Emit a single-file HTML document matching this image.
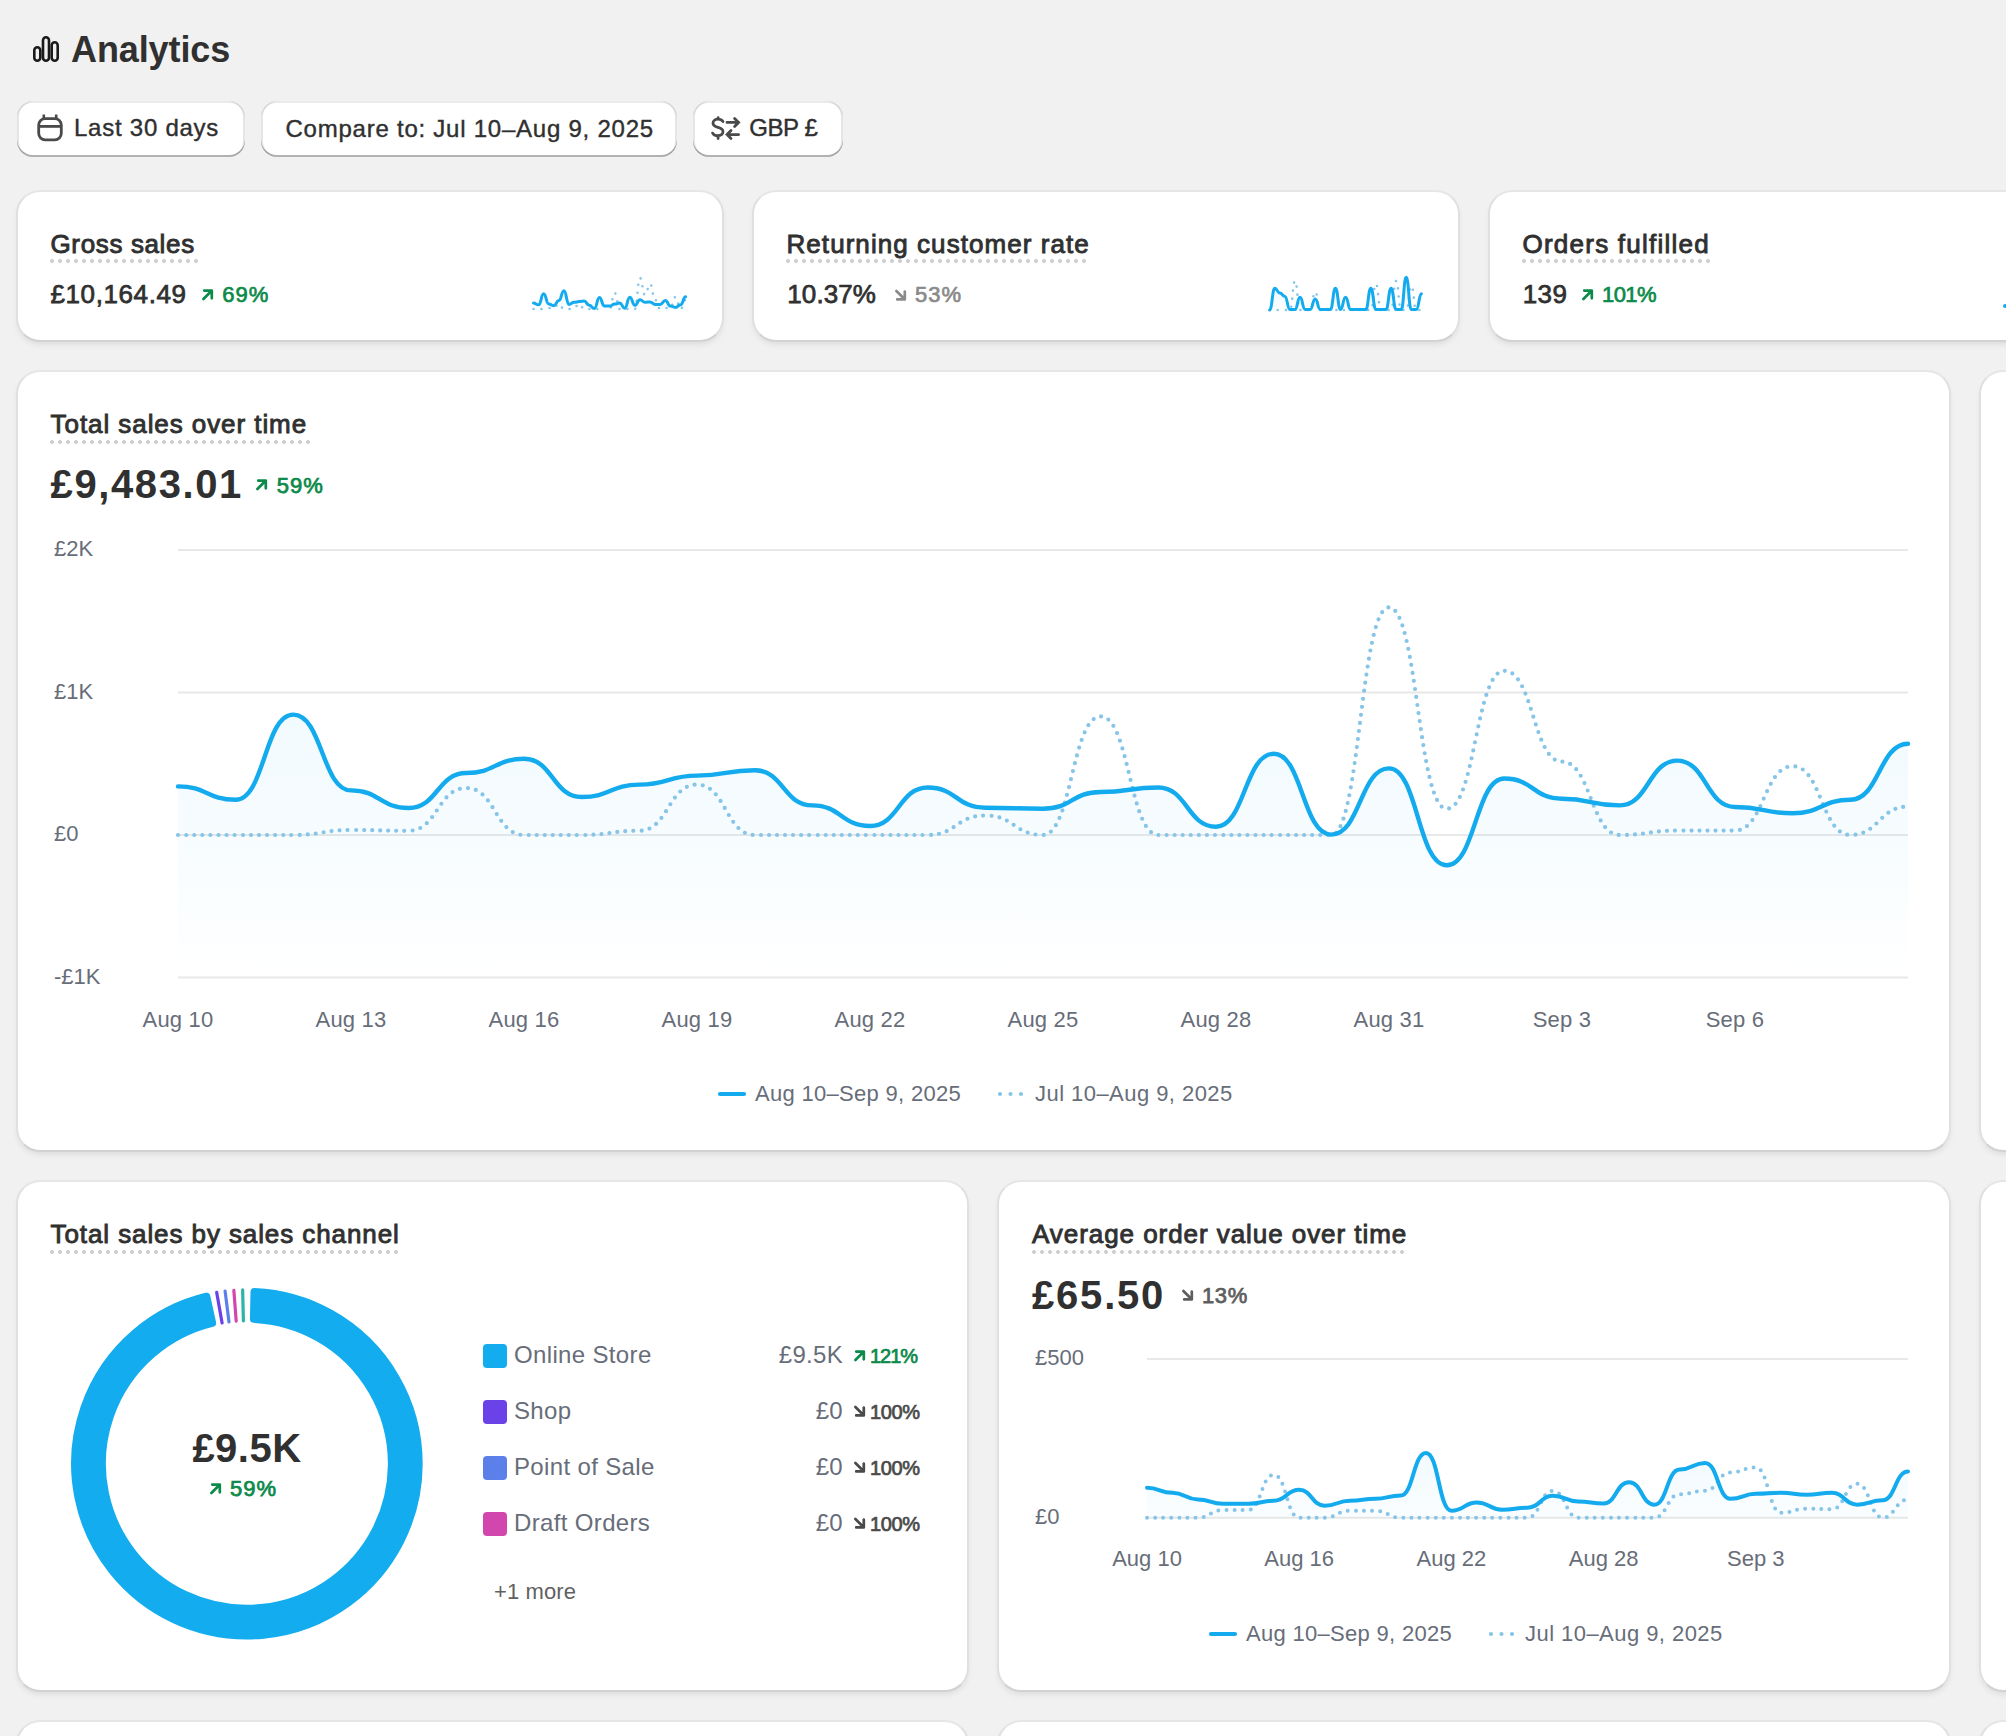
<!DOCTYPE html>
<html><head><meta charset="utf-8">
<style>
html,body{margin:0;padding:0;}
body{width:2006px;height:1736px;overflow:hidden;background:#f1f1f1;position:relative;font-family:"Liberation Sans",sans-serif;color:#303030;}
.t{position:absolute;white-space:nowrap;line-height:1;}
.card{position:absolute;box-sizing:border-box;background:#fff;border:2px solid #e0e0e0;border-top-color:#e6e6e6;border-bottom-color:#d2d2d2;border-radius:24px;box-shadow:0 4px 6px -2px rgba(26,26,26,.10);}
.btn{position:absolute;background:#fff;border-radius:16px;box-shadow: inset 0 2px 0 rgba(0,0,0,.08), inset 0 -2px 0 rgba(0,0,0,.30), inset -2px 0 0 rgba(0,0,0,.10), inset 2px 0 0 rgba(0,0,0,.10);}
.u{position:absolute;height:4px;background-image:radial-gradient(circle at 2px 2px,#cfcfcf 1.8px,transparent 2.2px);background-size:8px 4px;background-repeat:repeat-x;}
svg{position:absolute;overflow:visible;}
.a{position:absolute;}
</style></head><body>
<svg style="left:0;top:0" width="80" height="80"><g fill="none" stroke="#1a1a1a" stroke-width="2.6"><rect x="34.3" y="47.3" width="6" height="13.4" rx="3"/><rect x="43" y="37.2" width="6" height="23.5" rx="3"/><rect x="51.7" y="42.2" width="6" height="18.5" rx="3"/></g></svg><div class="t" style="left:71px;top:31.7px;font-size:36px;font-weight:700;color:#303030;letter-spacing:-0.1px;">Analytics</div>
<div class="btn" style="left:17px;top:101px;width:228px;height:56px"></div><svg style="left:0;top:0" width="80" height="160"><g fill="none" stroke="#4a4a4a" stroke-width="2.8"><rect x="38.7" y="118.6" width="22.6" height="21.2" rx="6.5"/><path d="M38.7 126.4H61.3"/><path d="M43.8 114.5v4M56.2 114.5v4" stroke-width="2.6"/></g></svg><div class="t" style="left:74px;top:116.4px;font-size:24px;font-weight:400;color:#303030;letter-spacing:0.75px;-webkit-text-stroke:0.4px #303030;">Last 30 days</div>
<div class="btn" style="left:261px;top:101px;width:416px;height:56px"></div><div class="t" style="left:285.5px;top:116.6px;font-size:24px;font-weight:400;color:#303030;letter-spacing:0.76px;-webkit-text-stroke:0.4px #303030;">Compare to: Jul 10–Aug 9, 2025</div>
<div class="btn" style="left:693px;top:101px;width:150px;height:56px"></div><svg style="left:0;top:0" width="760" height="160"><g fill="none" stroke="#4a4a4a" stroke-width="2.8" stroke-linecap="round"><path d="M723.0 121.6c-1-1.6-2.8-2.4-5-2.4-2.9 0-5 1.6-5 4 0 2.5 2.3 3.3 5 4.1 2.8 0.8 5 1.7 5 4.3 0 2.5-2.2 4.1-5.2 4.1-2.4 0-4.3-0.9-5.2-2.6M718.1 117.6v1.6M718.1 135.9v2.6"/><path d="M727 122.4h11.6M734.6 118.4l4 4-4 4M738.6 134.6H727M731 130.6l-4 4 4 4"/></g></svg><div class="t" style="left:749.2px;top:116.4px;font-size:24px;font-weight:400;color:#303030;letter-spacing:-0.4px;-webkit-text-stroke:0.4px #303030;">GBP £</div>
<div class="card" style="left:16px;top:190px;width:708px;height:152px"></div><div class="t" style="left:50.5px;top:230.9px;font-size:26px;font-weight:400;color:#303030;letter-spacing:0.637px;-webkit-text-stroke:0.9px #303030;">Gross sales</div>
<div class="card" style="left:752px;top:190px;width:708px;height:152px"></div><div class="t" style="left:786.5px;top:230.9px;font-size:26px;font-weight:400;color:#303030;letter-spacing:1.059px;-webkit-text-stroke:0.9px #303030;">Returning customer rate</div>
<div class="card" style="left:1488px;top:190px;width:708px;height:152px"></div><div class="t" style="left:1522.5px;top:230.9px;font-size:26px;font-weight:400;color:#303030;letter-spacing:1.235px;-webkit-text-stroke:0.9px #303030;">Orders fulfilled</div>
<div class="u" style="left:50px;top:259px;width:148px"></div><div class="u" style="left:786px;top:259px;width:300px"></div><div class="u" style="left:1522px;top:259px;width:188px"></div><div class="t" style="left:50.5px;top:280.8px;font-size:26px;font-weight:400;color:#303030;letter-spacing:0.6px;-webkit-text-stroke:0.75px #303030;">£10,164.49</div>
<svg class="a" style="left:201px;top:287px" width="14" height="14" viewBox="0 0 14 14"><path d="M2.4 12L10.4 4M3.2 3.6H10.8V11.3" fill="none" stroke="#0c8a4a" stroke-width="2.7" stroke-linecap="round" stroke-linejoin="round"/></svg><div class="t" style="left:222.2px;top:284.2px;font-size:22px;font-weight:400;color:#0c8a4a;letter-spacing:1.0px;-webkit-text-stroke:0.7px #0c8a4a;">69%</div>
<div class="t" style="left:787.3px;top:281.0px;font-size:26px;font-weight:400;color:#303030;letter-spacing:0.1px;-webkit-text-stroke:0.75px #303030;">10.37%</div>
<svg class="a" style="left:894px;top:288px" width="14" height="14" viewBox="0 0 14 14"><path d="M2.4 3L10.4 11M3.2 11.4H10.8V3.7" fill="none" stroke="#8a8a8a" stroke-width="2.7" stroke-linecap="round" stroke-linejoin="round"/></svg><div class="t" style="left:915px;top:284.4px;font-size:22px;font-weight:400;color:#8a8a8a;letter-spacing:1.0px;-webkit-text-stroke:0.7px #8a8a8a;">53%</div>
<div class="t" style="left:1522.7px;top:280.6px;font-size:26px;font-weight:400;color:#303030;letter-spacing:0.4px;-webkit-text-stroke:0.75px #303030;">139</div>
<svg class="a" style="left:1581px;top:287px" width="14" height="14" viewBox="0 0 14 14"><path d="M2.4 12L10.4 4M3.2 3.6H10.8V11.3" fill="none" stroke="#0c8a4a" stroke-width="2.7" stroke-linecap="round" stroke-linejoin="round"/></svg><div class="t" style="left:1602px;top:284.0px;font-size:22px;font-weight:400;color:#0c8a4a;letter-spacing:-0.6px;-webkit-text-stroke:0.7px #0c8a4a;">101%</div>
<svg style="left:0;top:0" width="2006" height="400"><defs><linearGradient id="sg533" x1="0" y1="275" x2="0" y2="313" gradientUnits="userSpaceOnUse"><stop offset="0" stop-color="#13aaee" stop-opacity="0.12"/><stop offset="1" stop-color="#13aaee" stop-opacity="0"/></linearGradient></defs>
<path d="M533.5,303.1C536.0,303.1 536.0,304.8 538.6,304.8C541.1,304.8 541.1,293.8 543.6,293.8C546.2,293.8 546.2,304.0 548.7,304.0C551.2,304.0 551.2,305.7 553.8,305.7C556.3,305.7 556.3,300.6 558.9,300.6C561.4,300.6 561.4,290.8 563.9,290.8C566.5,290.8 566.5,304.4 569.0,304.4C571.5,304.4 571.5,302.3 574.1,302.3C576.6,302.3 576.6,301.6 579.1,301.6C581.7,301.6 581.7,301.0 584.2,301.0C586.7,301.0 586.7,305.3 589.3,305.3C591.8,305.3 591.8,308.6 594.3,308.6C596.9,308.6 596.9,297.6 599.4,297.6C601.9,297.6 601.9,306.1 604.5,306.1C607.0,306.1 607.0,306.1 609.5,306.1C612.1,306.1 612.1,304.0 614.6,304.0C617.2,304.0 617.2,303.1 619.7,303.1C622.2,303.1 622.2,308.2 624.8,308.2C627.3,308.2 627.3,297.2 629.8,297.2C632.4,297.2 632.4,305.3 634.9,305.3C637.4,305.3 637.4,299.7 640.0,299.7C642.5,299.7 642.5,302.3 645.0,302.3C647.6,302.3 647.6,301.9 650.1,301.9C652.6,301.9 652.6,304.4 655.2,304.4C657.7,304.4 657.7,304.4 660.2,304.4C662.8,304.4 662.8,300.4 665.3,300.4C667.9,300.4 667.9,306.1 670.4,306.1C672.9,306.1 672.9,307.4 675.5,307.4C678.0,307.4 678.0,304.8 680.5,304.8C683.1,304.8 683.1,296.8 685.6,296.8L685.6,313L533.5,313Z" fill="url(#sg533)"/>
<path d="M533.5,309.0C536.0,309.0 536.0,309.0 538.6,309.0C541.1,309.0 541.1,309.0 543.6,309.0C546.2,309.0 546.2,308.0 548.7,308.0C551.2,308.0 551.2,308.0 553.8,308.0C556.3,308.0 556.3,304.0 558.9,304.0C561.4,304.0 561.4,309.0 563.9,309.0C566.5,309.0 566.5,309.0 569.0,309.0C571.5,309.0 571.5,308.0 574.1,308.0C576.6,308.0 576.6,304.0 579.1,304.0C581.7,304.0 581.7,309.0 584.2,309.0C586.7,309.0 586.7,309.0 589.3,309.0C591.8,309.0 591.8,309.0 594.3,309.0C596.9,309.0 596.9,309.0 599.4,309.0C601.9,309.0 601.9,306.0 604.5,306.0C607.0,306.0 607.0,309.0 609.5,309.0C612.1,309.0 612.1,293.0 614.6,293.0C617.2,293.0 617.2,309.0 619.7,309.0C622.2,309.0 622.2,309.0 624.8,309.0C627.3,309.0 627.3,309.0 629.8,309.0C632.4,309.0 632.4,309.0 634.9,309.0C637.4,309.0 637.4,278.0 640.0,278.0C642.5,278.0 642.5,295.0 645.0,295.0C647.6,295.0 647.6,284.0 650.1,284.0C652.6,284.0 652.6,300.0 655.2,300.0C657.7,300.0 657.7,309.0 660.2,309.0C662.8,309.0 662.8,308.0 665.3,308.0C667.9,308.0 667.9,308.0 670.4,308.0C672.9,308.0 672.9,297.0 675.5,297.0C678.0,297.0 678.0,309.0 680.5,309.0C683.1,309.0 683.1,300.0 685.6,300.0" fill="none" stroke="#86c4e8" stroke-width="2.6" stroke-linecap="round" stroke-dasharray="0 8"/>
<path d="M533.5,303.1C536.0,303.1 536.0,304.8 538.6,304.8C541.1,304.8 541.1,293.8 543.6,293.8C546.2,293.8 546.2,304.0 548.7,304.0C551.2,304.0 551.2,305.7 553.8,305.7C556.3,305.7 556.3,300.6 558.9,300.6C561.4,300.6 561.4,290.8 563.9,290.8C566.5,290.8 566.5,304.4 569.0,304.4C571.5,304.4 571.5,302.3 574.1,302.3C576.6,302.3 576.6,301.6 579.1,301.6C581.7,301.6 581.7,301.0 584.2,301.0C586.7,301.0 586.7,305.3 589.3,305.3C591.8,305.3 591.8,308.6 594.3,308.6C596.9,308.6 596.9,297.6 599.4,297.6C601.9,297.6 601.9,306.1 604.5,306.1C607.0,306.1 607.0,306.1 609.5,306.1C612.1,306.1 612.1,304.0 614.6,304.0C617.2,304.0 617.2,303.1 619.7,303.1C622.2,303.1 622.2,308.2 624.8,308.2C627.3,308.2 627.3,297.2 629.8,297.2C632.4,297.2 632.4,305.3 634.9,305.3C637.4,305.3 637.4,299.7 640.0,299.7C642.5,299.7 642.5,302.3 645.0,302.3C647.6,302.3 647.6,301.9 650.1,301.9C652.6,301.9 652.6,304.4 655.2,304.4C657.7,304.4 657.7,304.4 660.2,304.4C662.8,304.4 662.8,300.4 665.3,300.4C667.9,300.4 667.9,306.1 670.4,306.1C672.9,306.1 672.9,307.4 675.5,307.4C678.0,307.4 678.0,304.8 680.5,304.8C683.1,304.8 683.1,296.8 685.6,296.8" fill="none" stroke="#13aaee" stroke-width="3" stroke-linecap="round" stroke-linejoin="round"/></svg>
<svg style="left:0;top:0" width="2006" height="400"><defs><linearGradient id="sg1269" x1="0" y1="275" x2="0" y2="313" gradientUnits="userSpaceOnUse"><stop offset="0" stop-color="#13aaee" stop-opacity="0.12"/><stop offset="1" stop-color="#13aaee" stop-opacity="0"/></linearGradient></defs>
<path d="M1269.7,309.9C1272.2,309.9 1272.2,288.3 1274.8,288.3C1277.3,288.3 1277.3,293.0 1279.8,293.0C1282.3,293.0 1282.3,296.4 1284.9,296.4C1287.4,296.4 1287.4,309.5 1289.9,309.5C1292.5,309.5 1292.5,309.5 1295.0,309.5C1297.5,309.5 1297.5,297.2 1300.0,297.2C1302.6,297.2 1302.6,309.5 1305.1,309.5C1307.6,309.5 1307.6,309.5 1310.2,309.5C1312.7,309.5 1312.7,298.9 1315.2,298.9C1317.7,298.9 1317.7,309.5 1320.3,309.5C1322.8,309.5 1322.8,309.5 1325.3,309.5C1327.9,309.5 1327.9,309.5 1330.4,309.5C1332.9,309.5 1332.9,288.3 1335.4,288.3C1338.0,288.3 1338.0,309.5 1340.5,309.5C1343.0,309.5 1343.0,297.2 1345.6,297.2C1348.1,297.2 1348.1,309.5 1350.6,309.5C1353.1,309.5 1353.1,309.5 1355.7,309.5C1358.2,309.5 1358.2,309.5 1360.7,309.5C1363.2,309.5 1363.2,309.5 1365.8,309.5C1368.3,309.5 1368.3,288.3 1370.8,288.3C1373.4,288.3 1373.4,309.5 1375.9,309.5C1378.4,309.5 1378.4,309.5 1380.9,309.5C1383.5,309.5 1383.5,309.5 1386.0,309.5C1388.5,309.5 1388.5,288.3 1391.1,288.3C1393.6,288.3 1393.6,309.5 1396.1,309.5C1398.6,309.5 1398.6,309.5 1401.2,309.5C1403.7,309.5 1403.7,277.3 1406.2,277.3C1408.8,277.3 1408.8,309.5 1411.3,309.5C1413.8,309.5 1413.8,309.5 1416.3,309.5C1418.9,309.5 1418.9,293.8 1421.4,293.8L1421.4,313L1269.7,313Z" fill="url(#sg1269)"/>
<path d="M1269.7,310.0C1272.2,310.0 1272.2,310.0 1274.8,310.0C1277.3,310.0 1277.3,310.0 1279.8,310.0C1282.3,310.0 1282.3,310.0 1284.9,310.0C1287.4,310.0 1287.4,310.0 1289.9,310.0C1292.5,310.0 1292.5,281.0 1295.0,281.0C1297.5,281.0 1297.5,310.0 1300.0,310.0C1302.6,310.0 1302.6,310.0 1305.1,310.0C1307.6,310.0 1307.6,310.0 1310.2,310.0C1312.7,310.0 1312.7,292.0 1315.2,292.0C1317.7,292.0 1317.7,310.0 1320.3,310.0C1322.8,310.0 1322.8,310.0 1325.3,310.0C1327.9,310.0 1327.9,310.0 1330.4,310.0C1332.9,310.0 1332.9,310.0 1335.4,310.0C1338.0,310.0 1338.0,310.0 1340.5,310.0C1343.0,310.0 1343.0,310.0 1345.6,310.0C1348.1,310.0 1348.1,310.0 1350.6,310.0C1353.1,310.0 1353.1,310.0 1355.7,310.0C1358.2,310.0 1358.2,310.0 1360.7,310.0C1363.2,310.0 1363.2,310.0 1365.8,310.0C1368.3,310.0 1368.3,310.0 1370.8,310.0C1373.4,310.0 1373.4,284.0 1375.9,284.0C1378.4,284.0 1378.4,310.0 1380.9,310.0C1383.5,310.0 1383.5,310.0 1386.0,310.0C1388.5,310.0 1388.5,310.0 1391.1,310.0C1393.6,310.0 1393.6,281.0 1396.1,281.0C1398.6,281.0 1398.6,310.0 1401.2,310.0C1403.7,310.0 1403.7,310.0 1406.2,310.0C1408.8,310.0 1408.8,286.0 1411.3,286.0C1413.8,286.0 1413.8,310.0 1416.3,310.0C1418.9,310.0 1418.9,310.0 1421.4,310.0" fill="none" stroke="#86c4e8" stroke-width="2.6" stroke-linecap="round" stroke-dasharray="0 8"/>
<path d="M1269.7,309.9C1272.2,309.9 1272.2,288.3 1274.8,288.3C1277.3,288.3 1277.3,293.0 1279.8,293.0C1282.3,293.0 1282.3,296.4 1284.9,296.4C1287.4,296.4 1287.4,309.5 1289.9,309.5C1292.5,309.5 1292.5,309.5 1295.0,309.5C1297.5,309.5 1297.5,297.2 1300.0,297.2C1302.6,297.2 1302.6,309.5 1305.1,309.5C1307.6,309.5 1307.6,309.5 1310.2,309.5C1312.7,309.5 1312.7,298.9 1315.2,298.9C1317.7,298.9 1317.7,309.5 1320.3,309.5C1322.8,309.5 1322.8,309.5 1325.3,309.5C1327.9,309.5 1327.9,309.5 1330.4,309.5C1332.9,309.5 1332.9,288.3 1335.4,288.3C1338.0,288.3 1338.0,309.5 1340.5,309.5C1343.0,309.5 1343.0,297.2 1345.6,297.2C1348.1,297.2 1348.1,309.5 1350.6,309.5C1353.1,309.5 1353.1,309.5 1355.7,309.5C1358.2,309.5 1358.2,309.5 1360.7,309.5C1363.2,309.5 1363.2,309.5 1365.8,309.5C1368.3,309.5 1368.3,288.3 1370.8,288.3C1373.4,288.3 1373.4,309.5 1375.9,309.5C1378.4,309.5 1378.4,309.5 1380.9,309.5C1383.5,309.5 1383.5,309.5 1386.0,309.5C1388.5,309.5 1388.5,288.3 1391.1,288.3C1393.6,288.3 1393.6,309.5 1396.1,309.5C1398.6,309.5 1398.6,309.5 1401.2,309.5C1403.7,309.5 1403.7,277.3 1406.2,277.3C1408.8,277.3 1408.8,309.5 1411.3,309.5C1413.8,309.5 1413.8,309.5 1416.3,309.5C1418.9,309.5 1418.9,293.8 1421.4,293.8" fill="none" stroke="#13aaee" stroke-width="3" stroke-linecap="round" stroke-linejoin="round"/></svg>
<svg style="left:0;top:0" width="2006" height="400"><circle cx="2005" cy="306" r="2" fill="#13aaee"/></svg><div class="card" style="left:16px;top:370px;width:1935px;height:782px"></div><div class="card" style="left:1979px;top:370px;width:800px;height:782px"></div><div class="t" style="left:50.6px;top:411.3px;font-size:26px;font-weight:400;color:#303030;letter-spacing:0.929px;-webkit-text-stroke:0.9px #303030;">Total sales over time</div>
<div class="u" style="left:50px;top:439.5px;width:260px"></div><div class="t" style="left:50.6px;top:463.6px;font-size:40px;font-weight:700;color:#303030;letter-spacing:1.6px;">£9,483.01</div>
<svg class="a" style="left:255px;top:477px" width="14" height="14" viewBox="0 0 14 14"><path d="M2.4 12L10.4 4M3.2 3.6H10.8V11.3" fill="none" stroke="#0c8a4a" stroke-width="2.7" stroke-linecap="round" stroke-linejoin="round"/></svg><div class="t" style="left:276.7px;top:474.7px;font-size:22px;font-weight:400;color:#0c8a4a;letter-spacing:1.0px;-webkit-text-stroke:0.75px #0c8a4a;">59%</div>
<div class="t" style="left:54px;top:537.9px;font-size:22px;font-weight:400;color:#676d79;">£2K</div>
<div class="t" style="left:54px;top:680.6px;font-size:22px;font-weight:400;color:#676d79;">£1K</div>
<div class="t" style="left:54px;top:822.9px;font-size:22px;font-weight:400;color:#676d79;">£0</div>
<div class="t" style="left:54px;top:965.9px;font-size:22px;font-weight:400;color:#676d79;">-£1K</div>
<div class="t" style="left:178.0px;top:1008.9px;font-size:22px;font-weight:400;color:#676d79;letter-spacing:0.2px;transform:translateX(-50%);">Aug 10</div>
<div class="t" style="left:351.0px;top:1008.9px;font-size:22px;font-weight:400;color:#676d79;letter-spacing:0.2px;transform:translateX(-50%);">Aug 13</div>
<div class="t" style="left:524.0px;top:1008.9px;font-size:22px;font-weight:400;color:#676d79;letter-spacing:0.2px;transform:translateX(-50%);">Aug 16</div>
<div class="t" style="left:697.0px;top:1008.9px;font-size:22px;font-weight:400;color:#676d79;letter-spacing:0.2px;transform:translateX(-50%);">Aug 19</div>
<div class="t" style="left:870.0px;top:1008.9px;font-size:22px;font-weight:400;color:#676d79;letter-spacing:0.2px;transform:translateX(-50%);">Aug 22</div>
<div class="t" style="left:1043.0px;top:1008.9px;font-size:22px;font-weight:400;color:#676d79;letter-spacing:0.2px;transform:translateX(-50%);">Aug 25</div>
<div class="t" style="left:1216.0px;top:1008.9px;font-size:22px;font-weight:400;color:#676d79;letter-spacing:0.2px;transform:translateX(-50%);">Aug 28</div>
<div class="t" style="left:1389.0px;top:1008.9px;font-size:22px;font-weight:400;color:#676d79;letter-spacing:0.2px;transform:translateX(-50%);">Aug 31</div>
<div class="t" style="left:1562.0px;top:1008.9px;font-size:22px;font-weight:400;color:#676d79;letter-spacing:0.2px;transform:translateX(-50%);">Sep 3</div>
<div class="t" style="left:1735.0px;top:1008.9px;font-size:22px;font-weight:400;color:#676d79;letter-spacing:0.2px;transform:translateX(-50%);">Sep 6</div>
<svg style="left:0;top:0" width="2006" height="1200"><defs><linearGradient id="mg" x1="0" y1="700" x2="0" y2="975" gradientUnits="userSpaceOnUse"><stop offset="0" stop-color="#13aaee" stop-opacity="0.06"/><stop offset="0.5" stop-color="#13aaee" stop-opacity="0.035"/><stop offset="1" stop-color="#13aaee" stop-opacity="0"/></linearGradient></defs>
<path d="M178,550H1908" stroke="#e8e8e8" stroke-width="2"/><path d="M178,692.6H1908" stroke="#e8e8e8" stroke-width="2"/><path d="M178,835H1908" stroke="#e8e8e8" stroke-width="2"/><path d="M178,977.6H1908" stroke="#e8e8e8" stroke-width="2"/>
<path d="M178.0,786.4C206.8,786.4 206.8,799.8 235.7,799.8C264.5,799.8 264.5,714.6 293.3,714.6C322.2,714.6 322.2,790.4 351.0,790.4C379.8,790.4 379.8,808.0 408.7,808.0C437.5,808.0 437.5,773.0 466.3,773.0C495.2,773.0 495.2,758.8 524.0,758.8C552.8,758.8 552.8,797.0 581.7,797.0C610.5,797.0 610.5,784.6 639.3,784.6C668.2,784.6 668.2,775.6 697.0,775.6C725.8,775.6 725.8,770.2 754.7,770.2C783.5,770.2 783.5,805.4 812.3,805.4C841.2,805.4 841.2,826.0 870.0,826.0C898.8,826.0 898.8,787.5 927.7,787.5C956.5,787.5 956.5,807.7 985.3,807.7C1014.2,807.7 1014.2,808.8 1043.0,808.8C1071.8,808.8 1071.8,792.0 1100.7,792.0C1129.5,792.0 1129.5,787.5 1158.3,787.5C1187.2,787.5 1187.2,826.7 1216.0,826.7C1244.8,826.7 1244.8,753.8 1273.7,753.8C1302.5,753.8 1302.5,834.6 1331.3,834.6C1360.2,834.6 1360.2,768.4 1389.0,768.4C1417.8,768.4 1417.8,865.3 1446.7,865.3C1475.5,865.3 1475.5,778.5 1504.3,778.5C1533.2,778.5 1533.2,798.7 1562.0,798.7C1590.8,798.7 1590.8,805.4 1619.7,805.4C1648.5,805.4 1648.5,760.6 1677.3,760.6C1706.2,760.6 1706.2,807.0 1735.0,807.0C1763.8,807.0 1763.8,813.3 1792.7,813.3C1821.5,813.3 1821.5,799.8 1850.3,799.8C1879.2,799.8 1879.2,743.8 1908.0,743.8L1908,975L178,975Z" fill="url(#mg)"/>
<path d="M178.0,835.0C206.8,835.0 206.8,835.0 235.7,835.0C264.5,835.0 264.5,835.0 293.3,835.0C322.2,835.0 322.2,830.0 351.0,830.0C379.8,830.0 379.8,830.8 408.7,830.8C437.5,830.8 437.5,788.0 466.3,788.0C495.2,788.0 495.2,835.0 524.0,835.0C552.8,835.0 552.8,835.0 581.7,835.0C610.5,835.0 610.5,830.8 639.3,830.8C668.2,830.8 668.2,784.6 697.0,784.6C725.8,784.6 725.8,835.0 754.7,835.0C783.5,835.0 783.5,835.0 812.3,835.0C841.2,835.0 841.2,835.0 870.0,835.0C898.8,835.0 898.8,835.0 927.7,835.0C956.5,835.0 956.5,815.5 985.3,815.5C1014.2,815.5 1014.2,835.0 1043.0,835.0C1071.8,835.0 1071.8,716.4 1100.7,716.4C1129.5,716.4 1129.5,835.0 1158.3,835.0C1187.2,835.0 1187.2,835.0 1216.0,835.0C1244.8,835.0 1244.8,835.0 1273.7,835.0C1302.5,835.0 1302.5,835.0 1331.3,835.0C1360.2,835.0 1360.2,607.4 1389.0,607.4C1417.8,607.4 1417.8,808.8 1446.7,808.8C1475.5,808.8 1475.5,670.8 1504.3,670.8C1533.2,670.8 1533.2,761.7 1562.0,761.7C1590.8,761.7 1590.8,835.0 1619.7,835.0C1648.5,835.0 1648.5,830.6 1677.3,830.6C1706.2,830.6 1706.2,830.6 1735.0,830.6C1763.8,830.6 1763.8,766.2 1792.7,766.2C1821.5,766.2 1821.5,835.0 1850.3,835.0C1879.2,835.0 1879.2,806.6 1908.0,806.6" fill="none" stroke="#86c4e8" stroke-width="4.2" stroke-linecap="round" stroke-dasharray="0 8.1"/>
<path d="M178.0,786.4C206.8,786.4 206.8,799.8 235.7,799.8C264.5,799.8 264.5,714.6 293.3,714.6C322.2,714.6 322.2,790.4 351.0,790.4C379.8,790.4 379.8,808.0 408.7,808.0C437.5,808.0 437.5,773.0 466.3,773.0C495.2,773.0 495.2,758.8 524.0,758.8C552.8,758.8 552.8,797.0 581.7,797.0C610.5,797.0 610.5,784.6 639.3,784.6C668.2,784.6 668.2,775.6 697.0,775.6C725.8,775.6 725.8,770.2 754.7,770.2C783.5,770.2 783.5,805.4 812.3,805.4C841.2,805.4 841.2,826.0 870.0,826.0C898.8,826.0 898.8,787.5 927.7,787.5C956.5,787.5 956.5,807.7 985.3,807.7C1014.2,807.7 1014.2,808.8 1043.0,808.8C1071.8,808.8 1071.8,792.0 1100.7,792.0C1129.5,792.0 1129.5,787.5 1158.3,787.5C1187.2,787.5 1187.2,826.7 1216.0,826.7C1244.8,826.7 1244.8,753.8 1273.7,753.8C1302.5,753.8 1302.5,834.6 1331.3,834.6C1360.2,834.6 1360.2,768.4 1389.0,768.4C1417.8,768.4 1417.8,865.3 1446.7,865.3C1475.5,865.3 1475.5,778.5 1504.3,778.5C1533.2,778.5 1533.2,798.7 1562.0,798.7C1590.8,798.7 1590.8,805.4 1619.7,805.4C1648.5,805.4 1648.5,760.6 1677.3,760.6C1706.2,760.6 1706.2,807.0 1735.0,807.0C1763.8,807.0 1763.8,813.3 1792.7,813.3C1821.5,813.3 1821.5,799.8 1850.3,799.8C1879.2,799.8 1879.2,743.8 1908.0,743.8" fill="none" stroke="#13aaee" stroke-width="4.4" stroke-linecap="round"/>
<path d="M720,1094H744" stroke="#13aaee" stroke-width="4.2" stroke-linecap="round"/>
<path d="M1000,1094H1024" stroke="#86c4e8" stroke-width="4.2" stroke-linecap="round" stroke-dasharray="0 10.5"/>
</svg><div class="t" style="left:755px;top:1083.4px;font-size:22px;font-weight:400;color:#676d79;letter-spacing:0.3px;">Aug 10–Sep 9, 2025</div>
<div class="t" style="left:1035px;top:1083.4px;font-size:22px;font-weight:400;color:#676d79;letter-spacing:0.45px;">Jul 10–Aug 9, 2025</div>
<div class="card" style="left:16px;top:1180px;width:953px;height:512px"></div><div class="card" style="left:997px;top:1180px;width:954px;height:512px"></div><div class="card" style="left:1979px;top:1180px;width:800px;height:512px"></div><div class="card" style="left:16px;top:1720px;width:953px;height:512px"></div><div class="card" style="left:997px;top:1720px;width:954px;height:512px"></div><div class="card" style="left:1979px;top:1720px;width:800px;height:512px"></div><div class="t" style="left:50.6px;top:1221.3px;font-size:26px;font-weight:400;color:#303030;letter-spacing:0.905px;-webkit-text-stroke:0.9px #303030;">Total sales by sales channel</div>
<div class="u" style="left:50px;top:1249.5px;width:348px"></div><svg style="left:0;top:0" width="2006" height="1736"><path d="M254.50,1292.07A171.8,171.8 0 1 1 206.40,1296.74L212.11,1322.93A145,145 0 1 0 253.93,1318.87Z" fill="#12acef" stroke="#12acef" stroke-width="8" stroke-linejoin="round"/><path d="M222.09,1322.97L216.70,1292.44" stroke="#6b42e8" stroke-width="3.2" stroke-linecap="round"/><path d="M228.99,1321.93L225.10,1291.17" stroke="#5b80e9" stroke-width="3.2" stroke-linecap="round"/><path d="M236.19,1321.20L233.86,1290.29" stroke="#d147ad" stroke-width="3.2" stroke-linecap="round"/><path d="M243.41,1320.84L242.65,1289.85" stroke="#2bb5a9" stroke-width="3.2" stroke-linecap="round"/></svg><div class="t" style="left:247px;top:1428.1px;font-size:40px;font-weight:700;color:#303030;letter-spacing:0.5px;transform:translateX(-50%);">£9.5K</div>
<svg class="a" style="left:209px;top:1481px" width="14" height="14" viewBox="0 0 14 14"><path d="M2.4 12L10.4 4M3.2 3.6H10.8V11.3" fill="none" stroke="#0c8a4a" stroke-width="2.7" stroke-linecap="round" stroke-linejoin="round"/></svg><div class="t" style="left:230px;top:1478.4px;font-size:22px;font-weight:400;color:#0c8a4a;letter-spacing:1.0px;-webkit-text-stroke:0.75px #0c8a4a;">59%</div>
<div style="position:absolute;left:483px;top:1343.5px;width:24px;height:24px;border-radius:4px;background:#12acef"></div><div class="t" style="left:514px;top:1343.2px;font-size:24px;font-weight:400;color:#676d79;letter-spacing:0.35px;">Online Store</div>
<div class="t" style="left:843px;top:1343.2px;font-size:24px;font-weight:400;color:#676d79;letter-spacing:0.3px;transform:translateX(-100%);">£9.5K</div>
<svg class="a" style="left:853px;top:1348px" width="14" height="14" viewBox="0 0 14 14"><path d="M2.4 12L10.4 4M3.2 3.6H10.8V11.3" fill="none" stroke="#0c8a4a" stroke-width="2.7" stroke-linecap="round" stroke-linejoin="round"/></svg><div class="t" style="left:870px;top:1345.6px;font-size:20px;font-weight:400;color:#0c8a4a;letter-spacing:-1.0px;-webkit-text-stroke:0.7px #0c8a4a;">121%</div>
<div style="position:absolute;left:483px;top:1399.5px;width:24px;height:24px;border-radius:4px;background:#6b42e8"></div><div class="t" style="left:514px;top:1399.2px;font-size:24px;font-weight:400;color:#676d79;letter-spacing:0.35px;">Shop</div>
<div class="t" style="left:843px;top:1399.2px;font-size:24px;font-weight:400;color:#676d79;letter-spacing:0.3px;transform:translateX(-100%);">£0</div>
<svg class="a" style="left:853px;top:1404px" width="14" height="14" viewBox="0 0 14 14"><path d="M2.4 3L10.4 11M3.2 11.4H10.8V3.7" fill="none" stroke="#4a4a4a" stroke-width="2.7" stroke-linecap="round" stroke-linejoin="round"/></svg><div class="t" style="left:870px;top:1401.6px;font-size:20px;font-weight:400;color:#4a4a4a;letter-spacing:-0.4px;-webkit-text-stroke:0.7px #4a4a4a;">100%</div>
<div style="position:absolute;left:483px;top:1455.5px;width:24px;height:24px;border-radius:4px;background:#5b80e9"></div><div class="t" style="left:514px;top:1455.2px;font-size:24px;font-weight:400;color:#676d79;letter-spacing:0.35px;">Point of Sale</div>
<div class="t" style="left:843px;top:1455.2px;font-size:24px;font-weight:400;color:#676d79;letter-spacing:0.3px;transform:translateX(-100%);">£0</div>
<svg class="a" style="left:853px;top:1460px" width="14" height="14" viewBox="0 0 14 14"><path d="M2.4 3L10.4 11M3.2 11.4H10.8V3.7" fill="none" stroke="#4a4a4a" stroke-width="2.7" stroke-linecap="round" stroke-linejoin="round"/></svg><div class="t" style="left:870px;top:1457.6px;font-size:20px;font-weight:400;color:#4a4a4a;letter-spacing:-0.4px;-webkit-text-stroke:0.7px #4a4a4a;">100%</div>
<div style="position:absolute;left:483px;top:1511.5px;width:24px;height:24px;border-radius:4px;background:#d147ad"></div><div class="t" style="left:514px;top:1511.2px;font-size:24px;font-weight:400;color:#676d79;letter-spacing:0.35px;">Draft Orders</div>
<div class="t" style="left:843px;top:1511.2px;font-size:24px;font-weight:400;color:#676d79;letter-spacing:0.3px;transform:translateX(-100%);">£0</div>
<svg class="a" style="left:853px;top:1516px" width="14" height="14" viewBox="0 0 14 14"><path d="M2.4 3L10.4 11M3.2 11.4H10.8V3.7" fill="none" stroke="#4a4a4a" stroke-width="2.7" stroke-linecap="round" stroke-linejoin="round"/></svg><div class="t" style="left:870px;top:1513.6px;font-size:20px;font-weight:400;color:#4a4a4a;letter-spacing:-0.4px;-webkit-text-stroke:0.7px #4a4a4a;">100%</div>
<div class="t" style="left:494px;top:1581.4px;font-size:22px;font-weight:400;color:#616161;letter-spacing:0.1px;">+1 more</div>
<div class="t" style="left:1032px;top:1221.3px;font-size:26px;font-weight:400;color:#303030;letter-spacing:0.943px;-webkit-text-stroke:0.9px #303030;">Average order value over time</div>
<div class="u" style="left:1032px;top:1249.5px;width:372px"></div><div class="t" style="left:1032px;top:1274.6px;font-size:40px;font-weight:700;color:#303030;letter-spacing:1.8px;">£65.50</div>
<svg class="a" style="left:1181px;top:1288px" width="14" height="14" viewBox="0 0 14 14"><path d="M2.4 3L10.4 11M3.2 11.4H10.8V3.7" fill="none" stroke="#5e5e5e" stroke-width="2.7" stroke-linecap="round" stroke-linejoin="round"/></svg><div class="t" style="left:1202px;top:1284.9px;font-size:22px;font-weight:400;color:#5e5e5e;letter-spacing:0.6px;-webkit-text-stroke:0.75px #5e5e5e;">13%</div>
<div class="t" style="left:1035px;top:1347.4px;font-size:22px;font-weight:400;color:#676d79;">£500</div>
<div class="t" style="left:1035px;top:1505.9px;font-size:22px;font-weight:400;color:#676d79;">£0</div>
<div class="t" style="left:1147.0px;top:1548.4px;font-size:22px;font-weight:400;color:#676d79;transform:translateX(-50%);">Aug 10</div>
<div class="t" style="left:1299.2px;top:1548.4px;font-size:22px;font-weight:400;color:#676d79;transform:translateX(-50%);">Aug 16</div>
<div class="t" style="left:1451.4px;top:1548.4px;font-size:22px;font-weight:400;color:#676d79;transform:translateX(-50%);">Aug 22</div>
<div class="t" style="left:1603.6px;top:1548.4px;font-size:22px;font-weight:400;color:#676d79;transform:translateX(-50%);">Aug 28</div>
<div class="t" style="left:1755.8px;top:1548.4px;font-size:22px;font-weight:400;color:#676d79;transform:translateX(-50%);">Sep 3</div>
<svg style="left:0;top:0" width="2006" height="1736"><defs><linearGradient id="ag" x1="0" y1="1450" x2="0" y2="1517" gradientUnits="userSpaceOnUse"><stop offset="0" stop-color="#13aaee" stop-opacity="0.06"/><stop offset="1" stop-color="#13aaee" stop-opacity="0.02"/></linearGradient></defs>
<path d="M1147,1359H1908M1147,1517.7H1908" stroke="#e8e8e8" stroke-width="2"/>
<path d="M1147.0,1487.8C1159.7,1487.8 1159.7,1492.8 1172.4,1492.8C1185.0,1492.8 1185.0,1499.4 1197.7,1499.4C1210.4,1499.4 1210.4,1503.7 1223.1,1503.7C1235.8,1503.7 1235.8,1503.7 1248.5,1503.7C1261.2,1503.7 1261.2,1500.8 1273.8,1500.8C1286.5,1500.8 1286.5,1489.8 1299.2,1489.8C1311.9,1489.8 1311.9,1505.7 1324.6,1505.7C1337.2,1505.7 1337.2,1500.8 1349.9,1500.8C1362.6,1500.8 1362.6,1498.8 1375.3,1498.8C1388.0,1498.8 1388.0,1495.4 1400.7,1495.4C1413.3,1495.4 1413.3,1452.9 1426.0,1452.9C1438.7,1452.9 1438.7,1510.7 1451.4,1510.7C1464.1,1510.7 1464.1,1502.4 1476.8,1502.4C1489.4,1502.4 1489.4,1509.7 1502.1,1509.7C1514.8,1509.7 1514.8,1507.7 1527.5,1507.7C1540.2,1507.7 1540.2,1495.8 1552.9,1495.8C1565.6,1495.8 1565.6,1501.4 1578.2,1501.4C1590.9,1501.4 1590.9,1503.4 1603.6,1503.4C1616.3,1503.4 1616.3,1482.2 1629.0,1482.2C1641.7,1482.2 1641.7,1504.7 1654.3,1504.7C1667.0,1504.7 1667.0,1469.5 1679.7,1469.5C1692.4,1469.5 1692.4,1462.9 1705.1,1462.9C1717.8,1462.9 1717.8,1498.8 1730.4,1498.8C1743.1,1498.8 1743.1,1493.8 1755.8,1493.8C1768.5,1493.8 1768.5,1492.8 1781.2,1492.8C1793.8,1492.8 1793.8,1494.8 1806.5,1494.8C1819.2,1494.8 1819.2,1492.8 1831.9,1492.8C1844.6,1492.8 1844.6,1504.7 1857.3,1504.7C1869.9,1504.7 1869.9,1500.2 1882.6,1500.2C1895.3,1500.2 1895.3,1471.4 1908.0,1471.4L1908,1517.7L1147,1517.7Z" fill="url(#ag)"/>
<path d="M1147.0,1517.7C1159.7,1517.7 1159.7,1517.7 1172.4,1517.7C1185.0,1517.7 1185.0,1517.7 1197.7,1517.7C1210.4,1517.7 1210.4,1510.0 1223.1,1510.0C1235.8,1510.0 1235.8,1510.0 1248.5,1510.0C1261.2,1510.0 1261.2,1474.8 1273.8,1474.8C1286.5,1474.8 1286.5,1517.7 1299.2,1517.7C1311.9,1517.7 1311.9,1517.7 1324.6,1517.7C1337.2,1517.7 1337.2,1510.7 1349.9,1510.7C1362.6,1510.7 1362.6,1510.7 1375.3,1510.7C1388.0,1510.7 1388.0,1517.7 1400.7,1517.7C1413.3,1517.7 1413.3,1517.7 1426.0,1517.7C1438.7,1517.7 1438.7,1517.7 1451.4,1517.7C1464.1,1517.7 1464.1,1517.7 1476.8,1517.7C1489.4,1517.7 1489.4,1517.7 1502.1,1517.7C1514.8,1517.7 1514.8,1517.7 1527.5,1517.7C1540.2,1517.7 1540.2,1490.8 1552.9,1490.8C1565.6,1490.8 1565.6,1517.7 1578.2,1517.7C1590.9,1517.7 1590.9,1517.7 1603.6,1517.7C1616.3,1517.7 1616.3,1517.7 1629.0,1517.7C1641.7,1517.7 1641.7,1517.7 1654.3,1517.7C1667.0,1517.7 1667.0,1494.2 1679.7,1494.2C1692.4,1494.2 1692.4,1490.8 1705.1,1490.8C1717.8,1490.8 1717.8,1472.4 1730.4,1472.4C1743.1,1472.4 1743.1,1467.5 1755.8,1467.5C1768.5,1467.5 1768.5,1512.7 1781.2,1512.7C1793.8,1512.7 1793.8,1508.7 1806.5,1508.7C1819.2,1508.7 1819.2,1509.3 1831.9,1509.3C1844.6,1509.3 1844.6,1483.8 1857.3,1483.8C1869.9,1483.8 1869.9,1517.7 1882.6,1517.7C1895.3,1517.7 1895.3,1499.4 1908.0,1499.4" fill="none" stroke="#86c4e8" stroke-width="4" stroke-linecap="round" stroke-dasharray="0 8.1"/>
<path d="M1147.0,1487.8C1159.7,1487.8 1159.7,1492.8 1172.4,1492.8C1185.0,1492.8 1185.0,1499.4 1197.7,1499.4C1210.4,1499.4 1210.4,1503.7 1223.1,1503.7C1235.8,1503.7 1235.8,1503.7 1248.5,1503.7C1261.2,1503.7 1261.2,1500.8 1273.8,1500.8C1286.5,1500.8 1286.5,1489.8 1299.2,1489.8C1311.9,1489.8 1311.9,1505.7 1324.6,1505.7C1337.2,1505.7 1337.2,1500.8 1349.9,1500.8C1362.6,1500.8 1362.6,1498.8 1375.3,1498.8C1388.0,1498.8 1388.0,1495.4 1400.7,1495.4C1413.3,1495.4 1413.3,1452.9 1426.0,1452.9C1438.7,1452.9 1438.7,1510.7 1451.4,1510.7C1464.1,1510.7 1464.1,1502.4 1476.8,1502.4C1489.4,1502.4 1489.4,1509.7 1502.1,1509.7C1514.8,1509.7 1514.8,1507.7 1527.5,1507.7C1540.2,1507.7 1540.2,1495.8 1552.9,1495.8C1565.6,1495.8 1565.6,1501.4 1578.2,1501.4C1590.9,1501.4 1590.9,1503.4 1603.6,1503.4C1616.3,1503.4 1616.3,1482.2 1629.0,1482.2C1641.7,1482.2 1641.7,1504.7 1654.3,1504.7C1667.0,1504.7 1667.0,1469.5 1679.7,1469.5C1692.4,1469.5 1692.4,1462.9 1705.1,1462.9C1717.8,1462.9 1717.8,1498.8 1730.4,1498.8C1743.1,1498.8 1743.1,1493.8 1755.8,1493.8C1768.5,1493.8 1768.5,1492.8 1781.2,1492.8C1793.8,1492.8 1793.8,1494.8 1806.5,1494.8C1819.2,1494.8 1819.2,1492.8 1831.9,1492.8C1844.6,1492.8 1844.6,1504.7 1857.3,1504.7C1869.9,1504.7 1869.9,1500.2 1882.6,1500.2C1895.3,1500.2 1895.3,1471.4 1908.0,1471.4" fill="none" stroke="#13aaee" stroke-width="4" stroke-linecap="round"/>
<path d="M1211,1634H1235" stroke="#13aaee" stroke-width="4.2" stroke-linecap="round"/>
<path d="M1491,1634H1515" stroke="#86c4e8" stroke-width="4.2" stroke-linecap="round" stroke-dasharray="0 10.5"/>
</svg><div class="t" style="left:1246px;top:1623.4px;font-size:22px;font-weight:400;color:#676d79;letter-spacing:0.3px;">Aug 10–Sep 9, 2025</div>
<div class="t" style="left:1525px;top:1623.4px;font-size:22px;font-weight:400;color:#676d79;letter-spacing:0.45px;">Jul 10–Aug 9, 2025</div>
</body></html>
